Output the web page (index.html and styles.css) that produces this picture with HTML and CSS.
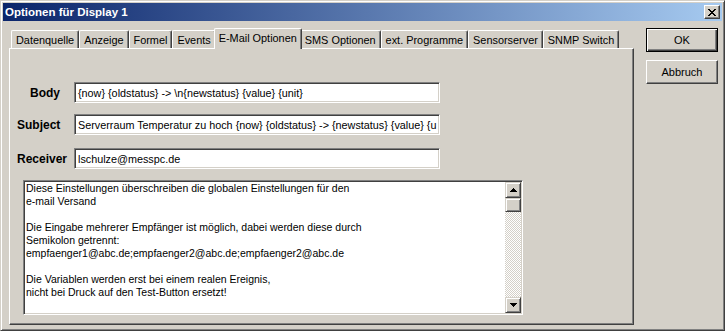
FILE: index.html
```html
<!DOCTYPE html>
<html lang="de">
<head>
  <meta charset="UTF-8" />
  <title>Optionen für Display 1</title>
  <link rel="stylesheet" href="styles.css">
</head>
<body>
  <div class="window">
    <div class="titlebar">
      <span class="title">Optionen für Display 1</span>
      <button class="close" type="button">
        <svg width="8" height="7" viewBox="0 0 8 7"><path d="M0 0h2v1h-2z M6 0h2v1h-2z M1 1h2v1h-2z M5 1h2v1h-2z M2 2h4v1h-4z M3 3h2v1h-2z M2 4h4v1h-4z M1 5h2v1h-2z M5 5h2v1h-2z M0 6h2v1h-2z M6 6h2v1h-2z" fill="#000"/></svg>
      </button>
    </div>

    <div class="client">
      <div class="tabctl">
        <div class="tabs">
          <div class="tab">Datenquelle</div>
          <div class="tab">Anzeige</div>
          <div class="tab">Formel</div>
          <div class="tab">Events</div>
          <div class="tab active">E-Mail Optionen</div>
          <div class="tab">SMS Optionen</div>
          <div class="tab">ext. Programme</div>
          <div class="tab">Sensorserver</div>
          <div class="tab">SNMP Switch</div>
        </div>

        <div class="panel">
          <div class="form">
            <label class="lbl lbl-body">Body</label>
            <div class="field">{now} {oldstatus} -&gt; \n{newstatus} {value} {unit}</div>

            <label class="lbl">Subject</label>
            <div class="field">Serverraum Temperatur zu hoch<span class="caret"></span>{now} {oldstatus} -&gt; {newstatus} {value} {u</div>

            <label class="lbl lbl-receiver">Receiver</label>
            <div class="field field-receiver">lschulze@messpc.de</div>
          </div>

          <div class="memo">
            <div class="memo-text">
              <p>Diese Einstellungen überschreiben die globalen Einstellungen für den<br>e-mail Versand</p>
              <p>Die Eingabe mehrerer Empfänger ist möglich, dabei werden diese durch<br>Semikolon getrennt:<br>empfaenger1@abc.de;empfaenger2@abc.de;empfaenger2@abc.de</p>
              <p>Die Variablen werden erst bei einem realen Ereignis,<br>nicht bei Druck auf den Test-Button ersetzt!</p>
            </div>
            <div class="scroll">
              <div class="sb-btn">
                <svg width="7" height="4" viewBox="0 0 7 4"><path d="M3 0h1v1h-1z M2 1h3v1h-3z M1 2h5v1h-5z M0 3h7v1h-7z" fill="#000"/></svg>
              </div>
              <div class="sb-btn thumb"></div>
              <div class="track"></div>
              <div class="sb-btn">
                <svg width="7" height="4" viewBox="0 0 7 4"><path d="M0 0h7v1h-7z M1 1h5v1h-5z M2 2h3v1h-3z M3 3h1v1h-1z" fill="#000"/></svg>
              </div>
            </div>
          </div>
        </div>
      </div>

      <div class="buttons">
        <button class="btn default" type="button">OK</button>
        <button class="btn" type="button">Abbruch</button>
      </div>
    </div>
  </div>
</body>
</html>
```

FILE: styles.css
```css
body {
  margin: 0;
  font-family: "Liberation Sans", Arial, sans-serif;
  font-size: 11px;
  color: #000;
  background-color: #d4d0c8;
}

.window {
  width: 725px;
  height: 331px;
  box-sizing: border-box;
  border: 1px solid;
  border-color: #d4d0c8 #404040 #404040 #d4d0c8;
  box-shadow: inset 1px 1px #fff, inset -1px -1px #808080;
  padding: 2px;
  background-color: #d4d0c8;
  display: flex;
  flex-direction: column;
}

.titlebar {
  height: 18px;
  flex: none;
  padding: 0 2px;
  display: flex;
  align-items: center;
  justify-content: space-between;
  background: linear-gradient(to right, #0a246a, #a6caf0);
}

.title {
  color: #fff;
  font-weight: bold;
  font-size: 11.5px;
}

.close {
  width: 16px;
  height: 14px;
  box-sizing: border-box;
  padding: 0;
  background-color: #d4d0c8;
  border: 1px solid;
  border-color: #fff #404040 #404040 #fff;
  box-shadow: inset -1px -1px #808080;
  display: flex;
  align-items: center;
  justify-content: center;
}

.client {
  flex: 1;
  display: flex;
  gap: 12px;
  padding: 7px 4px 3px 6px;
}

.tabctl {
  width: 625px;
  display: flex;
  flex-direction: column;
}

.tabs {
  height: 20px;
  padding-left: 2px;
  display: flex;
  align-items: flex-end;
  font-size: 10.9px;
}

.tab {
  height: 18px;
  box-sizing: border-box;
  padding: 0 4px;
  border-top: 1px solid #fff;
  border-left: 1px solid #fff;
  border-right: 1px solid #404040;
  border-radius: 2px 2px 0 0;
  box-shadow: inset -1px 0 #808080;
  display: flex;
  align-items: center;
  white-space: nowrap;
}

.tab.active {
  position: relative;
  height: 21px;
  margin: 0 -2px -1px;
  padding-bottom: 2px;
  background-color: #d4d0c8;
}

.panel {
  flex: 1;
  border: 1px solid;
  border-color: #fff #404040 #404040 #fff;
  box-shadow: inset -1px -1px #808080;
  padding: 33px 0 0 7px;
}

.form {
  display: grid;
  grid-template-columns: 57px 366px;
  row-gap: 11px;
  align-items: center;
}

.lbl {
  font-size: 12px;
  font-weight: bold;
}

.lbl-body {
  padding-left: 13px;
}

.lbl-receiver,
.field-receiver {
  margin-top: 2px;
}

.field {
  height: 21px;
  box-sizing: border-box;
  padding: 0 3px;
  font-size: 10.8px;
  background-color: #fff;
  border: 1px solid;
  border-color: #808080 #fff #fff #808080;
  box-shadow: inset 1px 1px #404040, inset -1px -1px #d4d0c8;
  display: flex;
  align-items: center;
  white-space: pre;
  overflow: hidden;
}

.caret {
  display: inline-block;
  width: 1px;
  height: 14px;
  margin: 0 2px 0 1px;
  background-color: #000;
}

.memo {
  width: 500px;
  height: 135px;
  box-sizing: border-box;
  margin: 11px 0 0 6px;
  background-color: #fff;
  border: 1px solid;
  border-color: #808080 #fff #fff #808080;
  box-shadow: inset 1px 1px #404040, inset -1px -1px #d4d0c8;
  padding: 1px;
  display: flex;
}

.memo-text {
  flex: 1;
  padding-left: 1px;
  font-size: 10.5px;
  line-height: 13px;
}

.memo-text p {
  margin: 0 0 13px;
}

.scroll {
  width: 16px;
  display: flex;
  flex-direction: column;
  background: repeating-conic-gradient(#d4d0c8 0 25%, #fff 0 50%) 0 0 / 2px 2px;
}

.sb-btn {
  height: 16px;
  box-sizing: border-box;
  background-color: #d4d0c8;
  border: 1px solid;
  border-color: #d4d0c8 #404040 #404040 #d4d0c8;
  box-shadow: inset 1px 1px #fff, inset -1px -1px #808080;
  display: flex;
  align-items: center;
  justify-content: center;
}

.thumb {
  height: 14px;
}

.track {
  flex: 1;
}

.buttons {
  display: flex;
  flex-direction: column;
  gap: 8px;
}

.btn {
  width: 72px;
  height: 24px;
  box-sizing: border-box;
  padding: 0;
  font-family: inherit;
  font-size: 11px;
  color: #000;
  background-color: #d4d0c8;
  border: 1px solid;
  border-color: #fff #404040 #404040 #fff;
  box-shadow: inset -1px -1px #808080;
}

.btn.default {
  border-color: #000;
  box-shadow: inset 1px 1px #fff, inset -1px -1px #404040, inset -2px -2px #808080;
}
```
